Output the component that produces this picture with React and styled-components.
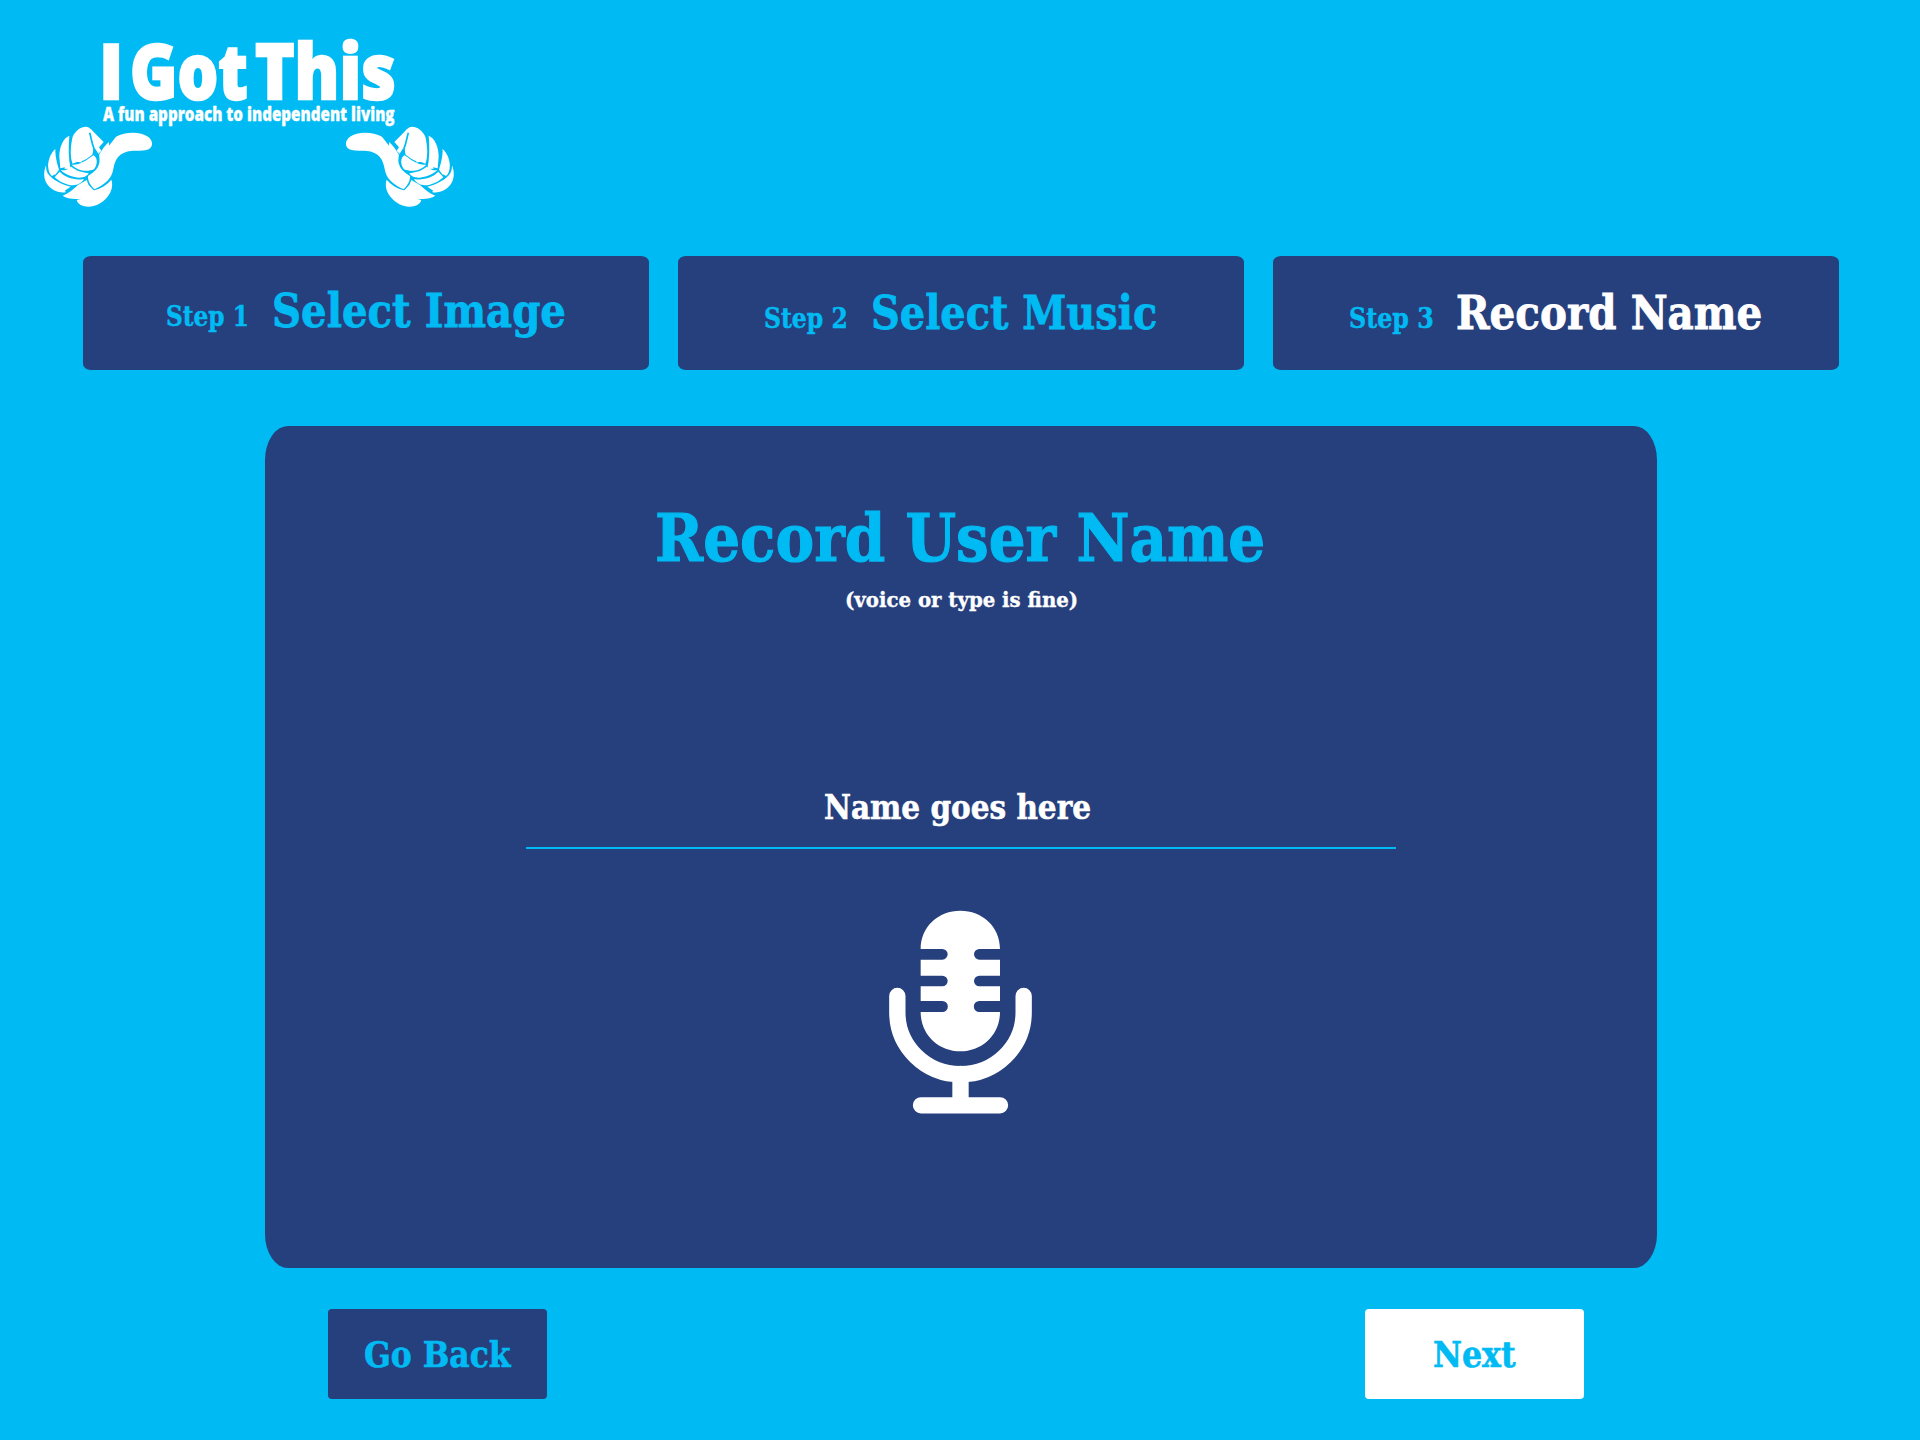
import { useLayoutEffect, useRef, useState } from 'react';
import styled, { createGlobalStyle } from 'styled-components';

const sky = '#00bbf3';
const navy = '#263f7d';

const GlobalStyle = createGlobalStyle`
  * { box-sizing: border-box; }
  body {
    margin: 0;
    background: ${sky};
    font-family: "DejaVu Serif", "DejaVu Serif Condensed", serif;
    font-weight: 700;
  }
`;

const Page = styled.main`
  width: 1920px;
  height: 1440px;
  display: flex;
  flex-direction: column;
  overflow: hidden;
  background: ${sky};
  -webkit-text-stroke: 0.018em;
`;

const FitBox = styled.span`
  display: block;
  flex: none;
  width: ${props => props.$width}px;
  height: ${props => props.$size}px;
  line-height: ${props => props.$size}px;
  font-size: ${props => props.$size}px;
  color: ${props => props.$color};
  white-space: nowrap;
`;

const FitInner = styled.span`
  display: inline-block;
  transform-origin: 0 50%;
  -webkit-text-stroke: ${props => props.$stroke}em ${props => props.$color};
`;

// squeezes a single line of text into the given width
const FitText = ({ width, size, color, stroke = 0.018, children, className }) => {
    const ref = useRef(null);
    const [scale, setScale] = useState(1);

    useLayoutEffect(() => {
        setScale(width / ref.current.offsetWidth);
    }, [width, size, children]);

    return (
        <FitBox className={className} $width={width} $size={size} $color={color}>
            <FitInner ref={ref} $stroke={stroke} $color={color} style={{ transform: `scaleX(${scale})` }}>{children}</FitInner>
        </FitBox>
    );
};

const Header = styled.header`
  height: 256px;
  padding: 32px 0 0 30px;
`;

const Logo = styled.div`
  width: 438px;
  display: flex;
  flex-direction: column;
  font-family: "Open Sans", "Noto Sans", sans-serif;
  font-weight: 800;
`;

const LogoTitle = styled.div`
  display: flex;
  height: 73px;
  padding-left: 69px;
`;

const LogoWord = styled(FitText)`
  margin-right: ${props => props.gap || 0}px;
`;

const Tagline = styled.div`
  height: 5px;
  padding-left: 73px;
`;

const Hands = styled.div`
  display: flex;
  justify-content: space-between;
  height: 110px;
`;

const HandSvg = styled.svg`
  width: 140px;
  height: 110px;
  transform: scaleX(${props => (props.$flip ? -1 : 1)});
`;

const Hand = ({ flip }) => (
    <HandSvg $flip={flip} viewBox="0 0 420 330" fill="#fff">
        <path d="M237 96L237 107L258 80C285 65 330 63 354 80C372 93 370 115 349 120C330 125 311 119 290 125C264 133 255 150 250 177C245 207 225 223 193 238C181 226 173 212 174 198C190 188 201 180 206 165C212 150 206 140 208 132C216 123 220 110 237 96Z" />
        <path d="M128 80C136 62 152 50 168 50C178 50 186 60 192 67L221 96L207 112L214 122L204 133L189 112C190 120 189 128 187 134C175 143 165 150 154 154L157 158C145 155 138 156 128 161C119 140 122 105 128 80Z" />
        <path d="M125 164C150 166 168 152 190 136C204 142 203 165 192 178C168 188 140 180 125 164Z" />
        <path d="M118 77C100 84 88 110 88 140L91 175L105 172L103 176L122 177C115 145 115 110 118 77Z" />
        <path d="M92 181C106 182 118 176 124 170C140 184 160 187 176 190C168 208 125 209 92 181Z" />
        <path d="M76 117C61 130 52 155 55 175C57 188 60 193 66 198L76 192L74 197L87 179C80 155 76 140 76 117Z" />
        <path d="M74 202L89 185C105 203 135 210 162 208C150 226 133 228 115 224C97 220 85 212 74 202Z" />
        <path d="M48 166C40 185 40 210 54 226C70 245 95 251 108 246L104 242L122 230C95 223 72 212 57 195C50 188 48 178 48 166Z" />
        <path d="M98 257C115 252 130 237 143 226L170 210L176 225L190 240L193 241C213 236 230 225 244 209C250 225 245 245 232 261C212 285 185 295 160 288C148 285 142 278 140 270L154 266C130 268 110 266 98 257Z" />
        <path d="M179 68C184 85 185 100 192 115L204 134" fill="none" stroke={sky} strokeWidth="5" />
    </HandSvg>
);

const Steps = styled.nav`
  display: flex;
  gap: 29.5px;
  padding-left: 83px;
  height: 114px;
`;

const Step = styled.div`
  display: flex;
  align-items: flex-start;
  width: 565.5px;
  height: 114px;
  padding: ${props => props.$top}px 0 0 ${props => props.$left}px;
  border-radius: 8px / 6px;
  background: ${navy};
`;

const StepNumber = styled(FitText)`
  margin-top: 15px;
  margin-right: ${props => props.gap}px;
`;

const Panel = styled.section`
  display: flex;
  flex-direction: column;
  align-items: center;
  width: 1392px;
  height: 842px;
  margin: 56px 0 0 265px;
  padding-top: 79px;
  border-radius: 23px / 34px;
  background: ${navy};
`;

const Title = styled.div`
  padding-right: 3px;
`;

const Hint = styled.div`
  margin-top: 18px;
`;

const NameField = styled.div`
  display: flex;
  justify-content: center;
  width: 870px;
  height: 58px;
  margin-top: 181px;
  padding-right: 7px;
  border-bottom: 2px solid ${sky};
`;

const MicSvg = styled.svg`
  width: 180px;
  height: 240px;
  margin: 40px 2px 0 0;
`;

const Microphone = () => (
    <MicSvg viewBox="0 0 540 720">
        <path
            fill="#fff"
            d="M152 180C152 112 206 65 271 65S390 112 390 180H328A16 16 0 0 0 328 212H390V260H328A16 16 0 0 0 328 292H390V336H328A16 16 0 0 0 328 369H390C390 438 336 487 271 487S152 438 152 369H217A16 16 0 0 0 217 336H152V292H217A16 16 0 0 0 217 260H152V212H217A16 16 0 0 0 217 180Z"
        />
        <path
            d="M82 321V370A189 185 0 0 0 461 370V321M271.500 555V649M153 649H390"
            fill="none"
            stroke="#fff"
            strokeWidth="49"
            strokeLinecap="round"
        />
    </MicSvg>
);

const Actions = styled.footer`
  display: flex;
  justify-content: space-between;
  width: 1255.5px;
  margin: 41px 0 0 328px;
`;

const Button = styled.button`
  display: flex;
  justify-content: center;
  width: 218.5px;
  height: 90px;
  padding: 28px 0 0;
  border: 0;
  border-radius: 4px;
  font: inherit;
  background: ${props => (props.$primary ? '#fff' : navy)};
`;

const steps = [
    { number: 'Step 1', title: 'Select Image', left: 83, top: 32, numberWidth: 83, gap: 23, titleWidth: 294 },
    { number: 'Step 2', title: 'Select Music', left: 86, top: 34, numberWidth: 84, gap: 23, titleWidth: 286 },
    { number: 'Step 3', title: 'Record Name', left: 76, top: 34, numberWidth: 85, gap: 22, titleWidth: 306, active: true },
];

const App = () => {
    return (
        <Page>
            <GlobalStyle />
            <Header>
                <Logo>
                    <LogoTitle>
                        <LogoWord width={24} size={76} stroke={0.03} color="#fff" gap={7}>I</LogoWord>
                        <LogoWord width={118} size={76} stroke={0.03} color="#fff" gap={7}>Got</LogoWord>
                        <LogoWord width={141} size={76} stroke={0.03} color="#fff">This</LogoWord>
                    </LogoTitle>
                    <Tagline>
                        <FitText width={292} size={18.5} color="#fff">A fun approach to independent living</FitText>
                    </Tagline>
                    <Hands>
                        <Hand />
                        <Hand flip />
                    </Hands>
                </Logo>
            </Header>
            <Steps>
                {steps.map(step => (
                    <Step key={step.number} $left={step.left} $top={step.top}>
                        <StepNumber width={step.numberWidth} size={28} color={sky} gap={step.gap}>{step.number}</StepNumber>
                        <FitText width={step.titleWidth} size={46} color={step.active ? '#fff' : sky}>{step.title}</FitText>
                    </Step>
                ))}
            </Steps>
            <Panel>
                <Title>
                    <FitText width={610} size={66} color={sky}>Record User Name</FitText>
                </Title>
                <Hint>
                    <FitText width={233} size={21} color="#fff">(voice or type is fine)</FitText>
                </Hint>
                <NameField>
                    <FitText width={267} size={33.5} color="#fff">Name goes here</FitText>
                </NameField>
                <Microphone />
            </Panel>
            <Actions>
                <Button>
                    <FitText width={147} size={35.5} color={sky}>Go Back</FitText>
                </Button>
                <Button $primary>
                    <FitText width={83} size={35.5} color={sky}>Next</FitText>
                </Button>
            </Actions>
        </Page>
    );
};

export default App;
